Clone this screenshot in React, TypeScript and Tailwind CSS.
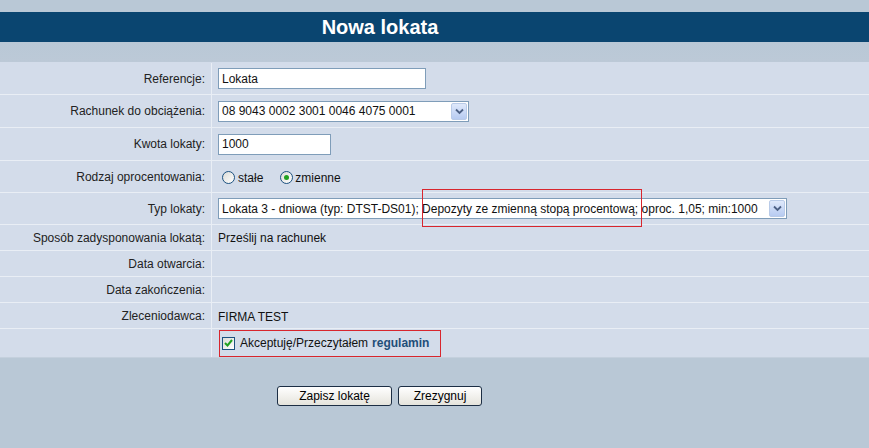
import React from 'react';

const Chevron = () => (
  <span className="flex h-[17px] w-[16px] items-center justify-center rounded-[2px] border border-[#b9cbe8] bg-gradient-to-b from-[#dfe9fb] to-[#b7cbf1]">
    <svg width="9" height="7" viewBox="0 0 9 7">
      <path d="M1 1.5 L4.5 5 L8 1.5" fill="none" stroke="#4d6185" strokeWidth="1.8" />
    </svg>
  </span>
);

const Select = ({ text, width }: { text: string; width: string }) => (
  <div className={`flex h-[21px] items-center justify-between border border-[#7f9db9] bg-white pl-[3px] pr-[1px] ${width}`}>
    <span className="whitespace-nowrap">{text}</span>
    <Chevron />
  </div>
);

const Input = ({ value, width }: { value: string; width: string }) => (
  <div className={`flex h-[21px] items-center border border-[#7f9db9] bg-white px-[3px] ${width}`}>{value}</div>
);

const Radio = ({ checked }: { checked?: boolean }) => (
  <span className="flex h-[13px] w-[13px] items-center justify-center rounded-full border border-[#1c5180] bg-gradient-to-br from-[#dcdcd7] to-white">
    {checked && <span className="h-[5px] w-[5px] rounded-full bg-[#21a121]" />}
  </span>
);

const Row = ({ label, h, children }: { label: string; h: string; children?: React.ReactNode }) => (
  <div className={`flex border-b border-[#e9eef5] ${h}`}>
    <div className="flex w-[212px] shrink-0 items-center justify-end border-r border-[#e9eef5] pr-[6px] text-[#222]">
      {label}
    </div>
    <div className="flex flex-1 items-center pl-[6px]">{children}</div>
  </div>
);

export default function App() {
  return (
    <div className="h-[448px] w-[869px] overflow-hidden bg-[#b9c8d6] pt-[12px] text-[12px] text-[#111] [font-family:'Liberation_Sans',Arial,sans-serif]">
      <div className="flex h-[30px] items-center bg-[#0a4570]">
        <h1 className="w-[760px] text-center text-[20px] font-bold text-white">Nowa lokata</h1>
      </div>
      <div className="h-[20px] bg-gradient-to-b from-[#b9c8d6] to-[#bcc9d7]" />
      <div className="bg-[#d3dcea]">
        <Row label="Referencje:" h="h-[33px] pt-[1px]">
          <Input value="Lokata" width="w-[208px]" />
        </Row>
        <Row label="Rachunek do obciążenia:" h="h-[33px]">
          <Select text="08 9043 0002 3001 0046 4075 0001" width="w-[251px]" />
        </Row>
        <Row label="Kwota lokaty:" h="h-[33px]">
          <Input value="1000" width="w-[113px]" />
        </Row>
        <Row label="Rodzaj oprocentowania:" h="h-[32px]">
          <div className="flex items-center pl-[4px] pt-[2px]">
            <Radio />
            <span className="ml-[3px] mr-[17px]">stałe</span>
            <Radio checked />
            <span className="ml-[2px]">zmienne</span>
          </div>
        </Row>
        <Row label="Typ lokaty:" h="h-[32px]">
          <div className="relative">
            <Select
              text="Lokata 3 - dniowa (typ: DTST-DS01); Depozyty ze zmienną stopą procentową; oproc. 1,05; min:1000"
              width="w-[569px]"
            />
            <div className="absolute left-[204px] top-[-9px] h-[38px] w-[220px] border border-[#d8262e]" />
          </div>
        </Row>
        <Row label="Sposób zadysponowania lokatą:" h="h-[26px]">
          <span>Prześlij na rachunek</span>
        </Row>
        <Row label="Data otwarcia:" h="h-[26px]" />
        <Row label="Data zakończenia:" h="h-[26px]" />
        <Row label="Zleceniodawca:" h="h-[26px]">
          <span className="pt-[2px]">FIRMA TEST</span>
        </Row>
        <div className="flex h-[29px] border-b border-[#c4d0dd]">
          <div className="w-[212px] shrink-0 border-r border-[#e9eef5]" />
          <div className="flex items-center pl-[7px]">
            <div className="flex h-[27px] w-[222px] items-center border border-[#d8262e] pl-[2px]">
              <span className="flex h-[13px] w-[13px] items-center justify-center border border-[#1c5180] bg-gradient-to-br from-[#dcdcd7] to-white">
                <svg width="9" height="8" viewBox="0 0 9 8">
                  <path d="M1 4 L3.5 6.5 L8 1" fill="none" stroke="#21a121" strokeWidth="2" />
                </svg>
              </span>
              <span className="ml-[5px]">Akceptuję/Przeczytałem</span>
              <span className="ml-[4px] font-bold text-[#1f4e79]">regulamin</span>
            </div>
          </div>
        </div>
      </div>
      <div className="flex gap-[6px] pl-[277px] pt-[28px]">
        <button className="h-[20px] w-[115px] rounded-[3px] border border-[#1c2e44] bg-gradient-to-b from-white to-[#e5e4dc] text-[12px] text-black">
          Zapisz lokatę
        </button>
        <button className="h-[20px] w-[84px] rounded-[3px] border border-[#1c2e44] bg-gradient-to-b from-white to-[#e5e4dc] text-[12px] text-black">
          Zrezygnuj
        </button>
      </div>
    </div>
  );
}
